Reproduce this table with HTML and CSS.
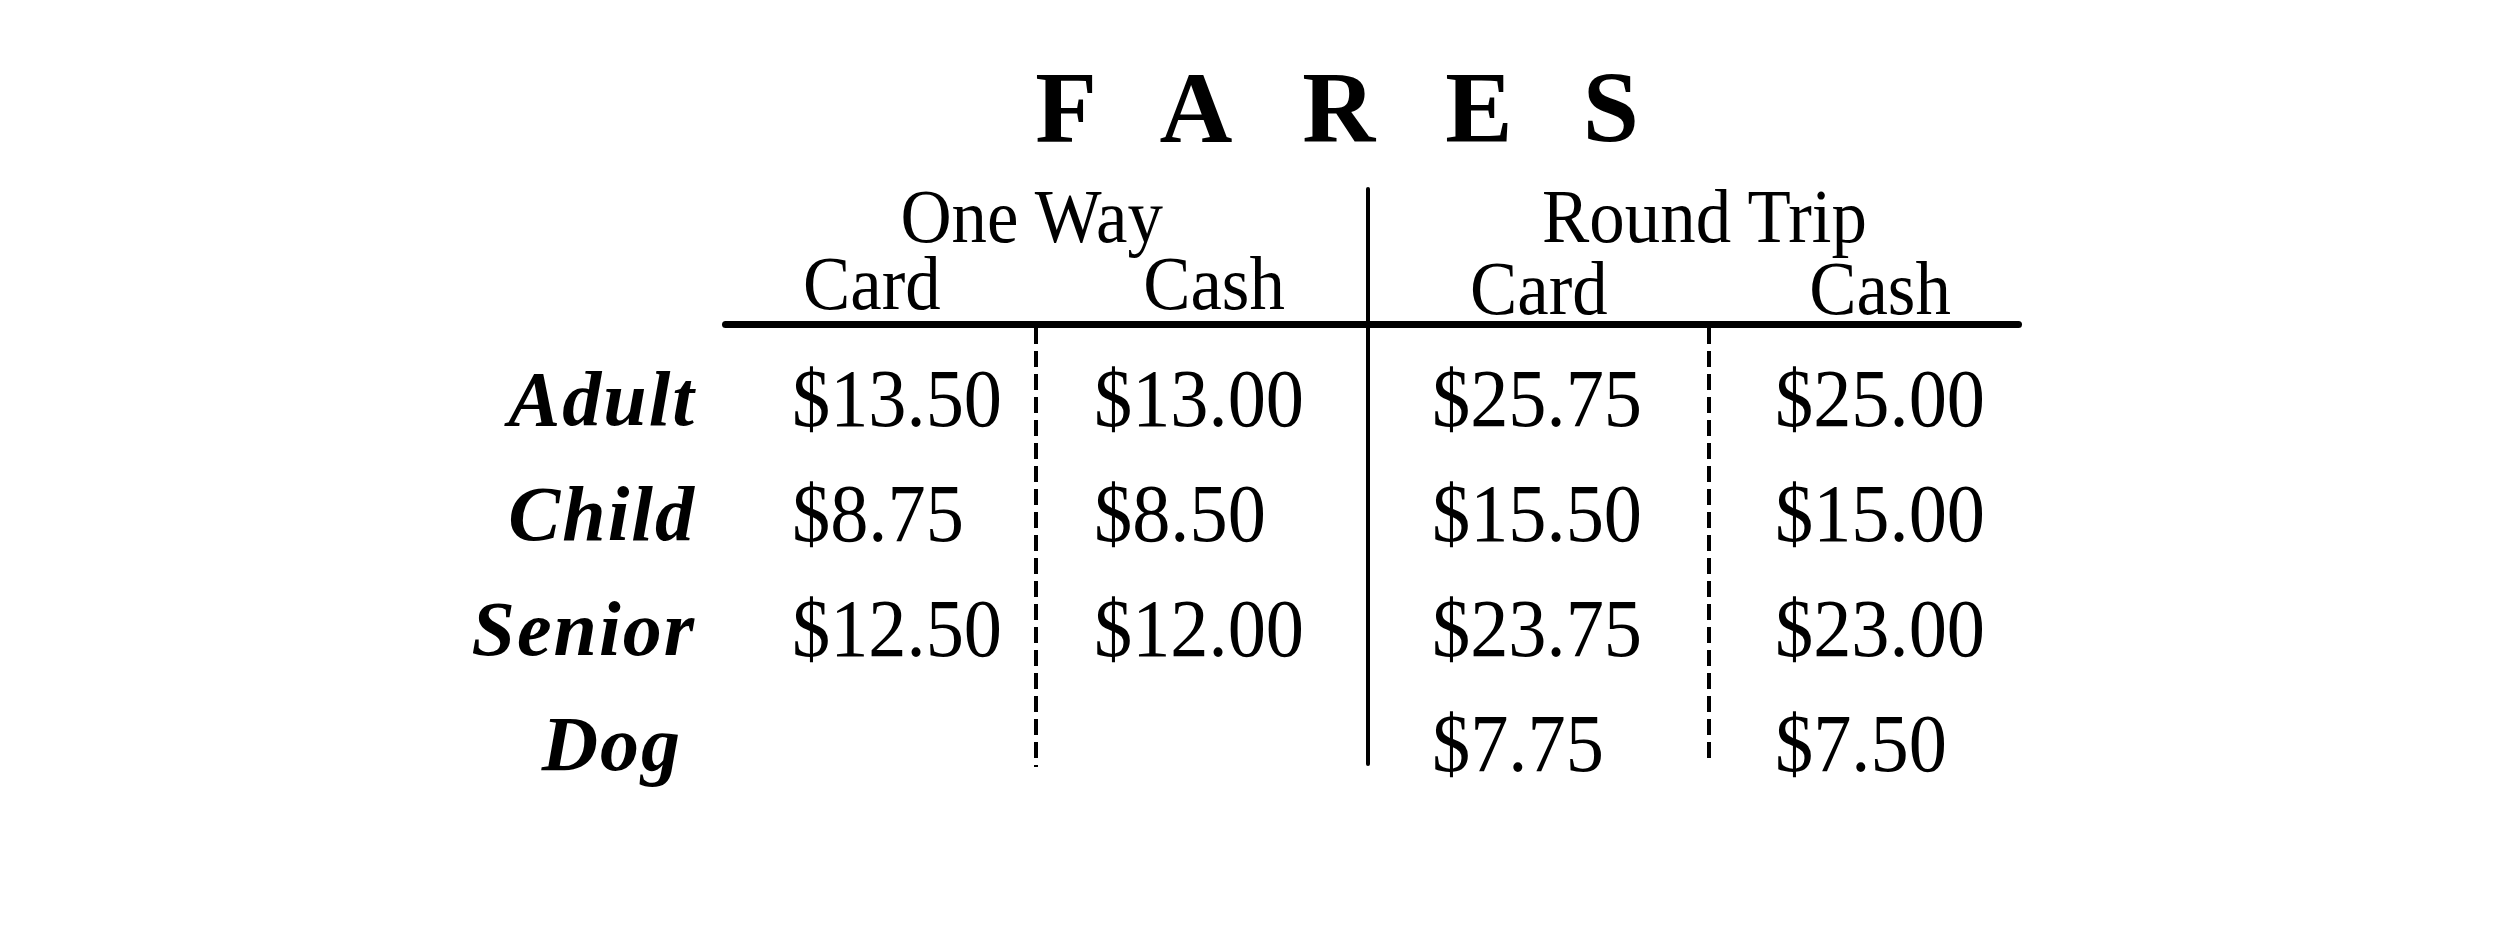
FILE: index.html
```html
<!DOCTYPE html>
<html lang="en">
<head>
<meta charset="utf-8">
<title>Fares</title>
<link rel="stylesheet" href="styles.css">
</head>
<body>
<div class="fares">
  <h1 class="title">FARES</h1>

  <div class="group g1"><span>One Way</span></div>
  <div class="group g2"><span>Round Trip</span></div>

  <div class="sub s1"><span>Card</span></div>
  <div class="sub s2"><span>Cash</span></div>
  <div class="sub s3"><span>Card</span></div>
  <div class="sub s4"><span>Cash</span></div>

  <div class="rule"></div>
  <div class="vline solid"></div>
  <div class="vline dash d1"></div>
  <div class="vline dash d2"></div>

  <div class="lab r1">Adult</div>
  <div class="val v1 r1"><span>$13.50</span></div>
  <div class="val v2 r1"><span>$13.00</span></div>
  <div class="val v3 r1"><span>$25.75</span></div>
  <div class="val v4 r1"><span>$25.00</span></div>

  <div class="lab r2">Child</div>
  <div class="val v1 r2"><span>$8.75</span></div>
  <div class="val v2 r2"><span>$8.50</span></div>
  <div class="val v3 r2"><span>$15.50</span></div>
  <div class="val v4 r2"><span>$15.00</span></div>

  <div class="lab r3">Senior</div>
  <div class="val v1 r3"><span>$12.50</span></div>
  <div class="val v2 r3"><span>$12.00</span></div>
  <div class="val v3 r3"><span>$23.75</span></div>
  <div class="val v4 r3"><span>$23.00</span></div>

  <div class="lab r4 dog">Dog</div>
  <div class="val v3 r4"><span>$7.75</span></div>
  <div class="val v4 r4"><span>$7.50</span></div>
</div>
</body>
</html>
```

FILE: styles.css
```css
html, body {
  margin: 0;
  background: #ffffff;
  color: #000000;
  font-family: "Liberation Serif", "Times New Roman", serif;
}

.fares {
  display: grid;
  grid-template-columns: 722px 314px 332px 341px 313px;
  grid-template-rows: auto 58px 76px 20px repeat(4, 115px);
  padding-top: 58px;
}

.title {
  grid-row: 1;
  grid-column: 2 / 6;
  margin: 0 0 28px;
  text-align: center;
  font-size: 101px;
  line-height: 101px;
  font-weight: 700;
  letter-spacing: 70px;
}

.group span,
.sub span,
.val span {
  display: inline-block;
  transform: scaleX(0.92);
}

.group span,
.sub span {
  transform-origin: center;
}

.val span {
  transform-origin: left center;
}

.group {
  grid-row: 2;
  font-size: 77px;
  line-height: 58px;
  text-align: center;
  white-space: nowrap;
}

.g1 { grid-column: 2 / 4; padding-right: 26px; }
.g2 { grid-column: 4 / 6; padding-left: 20px; }

.sub {
  grid-row: 3;
  font-size: 77px;
  line-height: 76px;
  text-align: center;
}

.s1 { grid-column: 2; padding-right: 14px; }
.s2 { grid-column: 3; padding-left: 24px; }
.s3 { grid-column: 4; padding-top: 5px; }
.s4 { grid-column: 5; padding-left: 28px; padding-top: 5px; }

.rule {
  grid-row: 4;
  grid-column: 2 / 6;
  align-self: start;
  height: 7px;
  background: #000;
  border-radius: 4px;
}

.vline {
  justify-self: start;
  align-self: start;
  width: 4px;
  margin-left: -2px;
}

.solid {
  grid-column: 4;
  grid-row: 2 / 9;
  height: 579px;
  background: #000;
  border-radius: 2px;
}

.dash {
  grid-row: 4 / 9;
  margin-top: 7px;
  background: repeating-linear-gradient(to bottom, #000 0 16px, transparent 16px 23px);
}

.d1 { grid-column: 3; height: 439px; }
.d2 { grid-column: 5; height: 436px; }

.lab {
  grid-column: 1;
  text-align: right;
  padding-right: 26px;
  font-size: 78px;
  line-height: 115px;
  font-weight: 700;
  font-style: italic;
  letter-spacing: 2px;
}

.dog { padding-right: 40px; }

.val {
  font-size: 83px;
  line-height: 115px;
  white-space: nowrap;
}

.v1 { grid-column: 2; padding-left: 70px; }
.v2 { grid-column: 3; padding-left: 58px; }
.v3 { grid-column: 4; padding-left: 64px; }
.v4 { grid-column: 5; padding-left: 66px; }

.r1 { grid-row: 5; }
.r2 { grid-row: 6; }
.r3 { grid-row: 7; }
.r4 { grid-row: 8; }
```
